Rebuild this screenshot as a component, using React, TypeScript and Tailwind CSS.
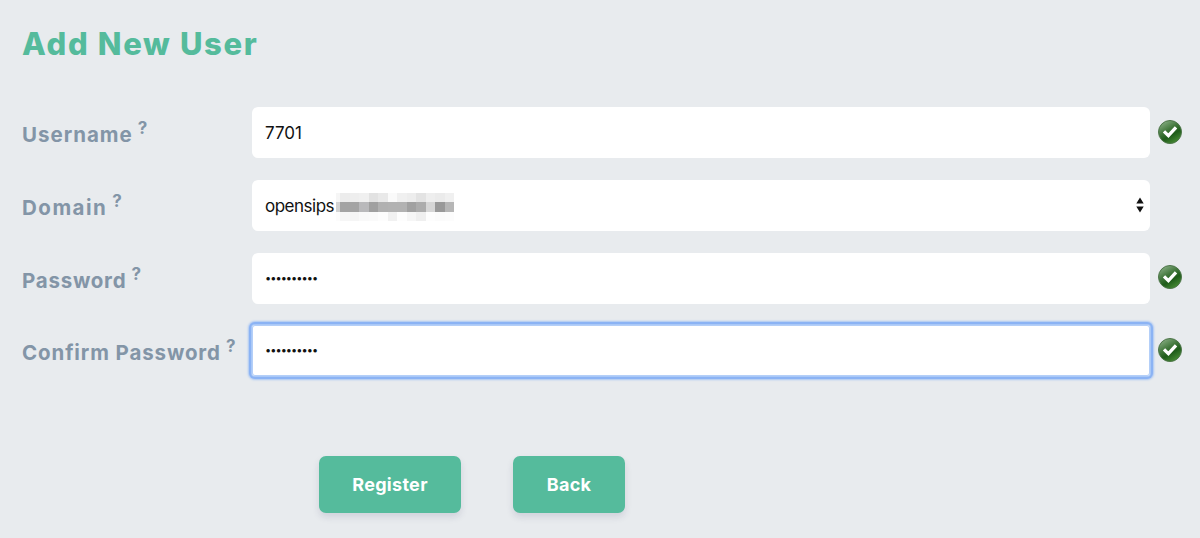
import type { ReactNode } from "react";

const maskRows = [
  ["#f6f6f6", "#ececec", "#eeeeee", "#f0f0f0", "#e2e2e2", "#e9e9e9", "#fafafa", "#f0f0f0", "#ededed", "#e3e3e3", "#eeeeee", "#ebebeb", "#f0f0f0"],
  ["#d2d2d2", "#a3a3a3", "#a4a4a4", "#b9b9bb", "#a0a0a0", "#b1b1b1", "#b2b2b2", "#b2b2b2", "#a1a1a1", "#acacac", "#d6d6d6", "#999999", "#b6b6b6"],
  ["#fcfcfc", "#f6f6f6", "#f5f5f5", "#f9f9f9", "#fafafa", "#fdfdfd", "#f1f1f1", "#fdfdfd", "#f6f6f6", "#efefef", "#fdfdfd", "#fbfbfb", "#fcfcfc"],
];

function ValidIcon() {
  return (
    <svg width="26" height="26" viewBox="0 0 26 26">
      <defs>
        <linearGradient id="ball" x1="0.15" y1="0" x2="0.75" y2="1">
          <stop offset="0" stopColor="#8fb38b" />
          <stop offset="0.4" stopColor="#44793e" />
          <stop offset="0.65" stopColor="#1f5c1a" />
          <stop offset="1" stopColor="#4a9036" />
        </linearGradient>
      </defs>
      <circle cx="13" cy="13" r="11.5" fill="url(#ball)" stroke="#4d7549" strokeWidth="1" />
      <path d="M7 12.4L11.4 16.6L19 8.3" fill="none" stroke="#fff" strokeWidth="3.3" />
    </svg>
  );
}

type FieldProps = { label: string; labelClass: string; valid?: boolean; focused?: boolean; children: ReactNode };

function Field({ label, labelClass, valid, focused, children }: FieldProps) {
  return (
    <div className="flex h-[51px] items-center">
      <label className="flex w-[230px] shrink-0 whitespace-nowrap pt-[5px] text-[20.5px] font-bold leading-6 text-[#8395a7]">
        <span className={labelClass}>{label}</span>
        <span className="-mt-[7px] ml-[5px] text-[17px]">?</span>
      </label>
      <div className={`flex h-[51px] w-[898px] shrink-0 items-center bg-white px-[13px] text-[17px] text-[#111] ${focused ? "rounded-[3px] shadow-[0_0_0_1px_#a9c8f7,0_0_0_3px_#8bb3f4,0_0_2px_4px_#a9c6f3,inset_0_0_0_1px_#b4cff8]" : "rounded-[6px]"}`}>
        {children}
      </div>
      {valid && <div className="-mt-[2px] ml-[7px]"><ValidIcon /></div>}
    </div>
  );
}

function Dots() {
  return <span className="text-[11px] leading-none tracking-[-0.97px]">••••••••••</span>;
}

export default function App() {
  return (
    <main className="h-[538px] w-[1200px] overflow-hidden bg-[#e8ebee] pl-[22px] pt-[24px] font-['Inter',sans-serif]">
      <h1 className="h-[83px] whitespace-nowrap text-[31px] font-extrabold leading-[40px] tracking-[1.65px] text-[#55bb9c]">Add New User</h1>
      <form className="flex flex-col gap-[21.8px]">
        <Field label="Username" labelClass="tracking-[1px]" valid>
          <span className="pt-[2px]">7701</span>
        </Field>
        <Field label="Domain" labelClass="tracking-[1.5px]">
          <span className="pt-[2px] tracking-[-0.5px]">opensips</span>
          <span className="ml-[2px] mt-[3px] grid grid-cols-[4px_repeat(12,9.5px)] grid-rows-[9.5px_9.5px_9.5px]">
            {maskRows.flat().map((color, i) => <span key={i} style={{ backgroundColor: color }} />)}
          </span>
          <svg className="-mr-[7px] ml-auto" width="8" height="16" viewBox="0 0 8 16">
            <path d="M4 0.5L7.7 6.5H0.3ZM4 15.5L0.3 9.5H7.7Z" fill="#111" />
          </svg>
        </Field>
        <Field label="Password" labelClass="tracking-[0.75px]" valid>
          <Dots />
        </Field>
        <Field label="Confirm Password" labelClass="tracking-[0.88px]" valid focused>
          <Dots />
        </Field>
      </form>
      <div className="ml-[297px] mt-[80px] flex gap-[52px]">
        <button type="button" className="h-[57px] w-[142px] rounded-[7px] bg-[#55bb9c] text-[18px] font-bold tracking-[0.3px] text-white shadow-[0_4px_7px_rgba(50,50,93,0.13)]">Register</button>
        <button type="button" className="h-[57px] w-[112px] rounded-[7px] bg-[#55bb9c] text-[18px] font-bold tracking-[0.3px] text-white shadow-[0_4px_7px_rgba(50,50,93,0.13)]">Back</button>
      </div>
    </main>
  );
}
